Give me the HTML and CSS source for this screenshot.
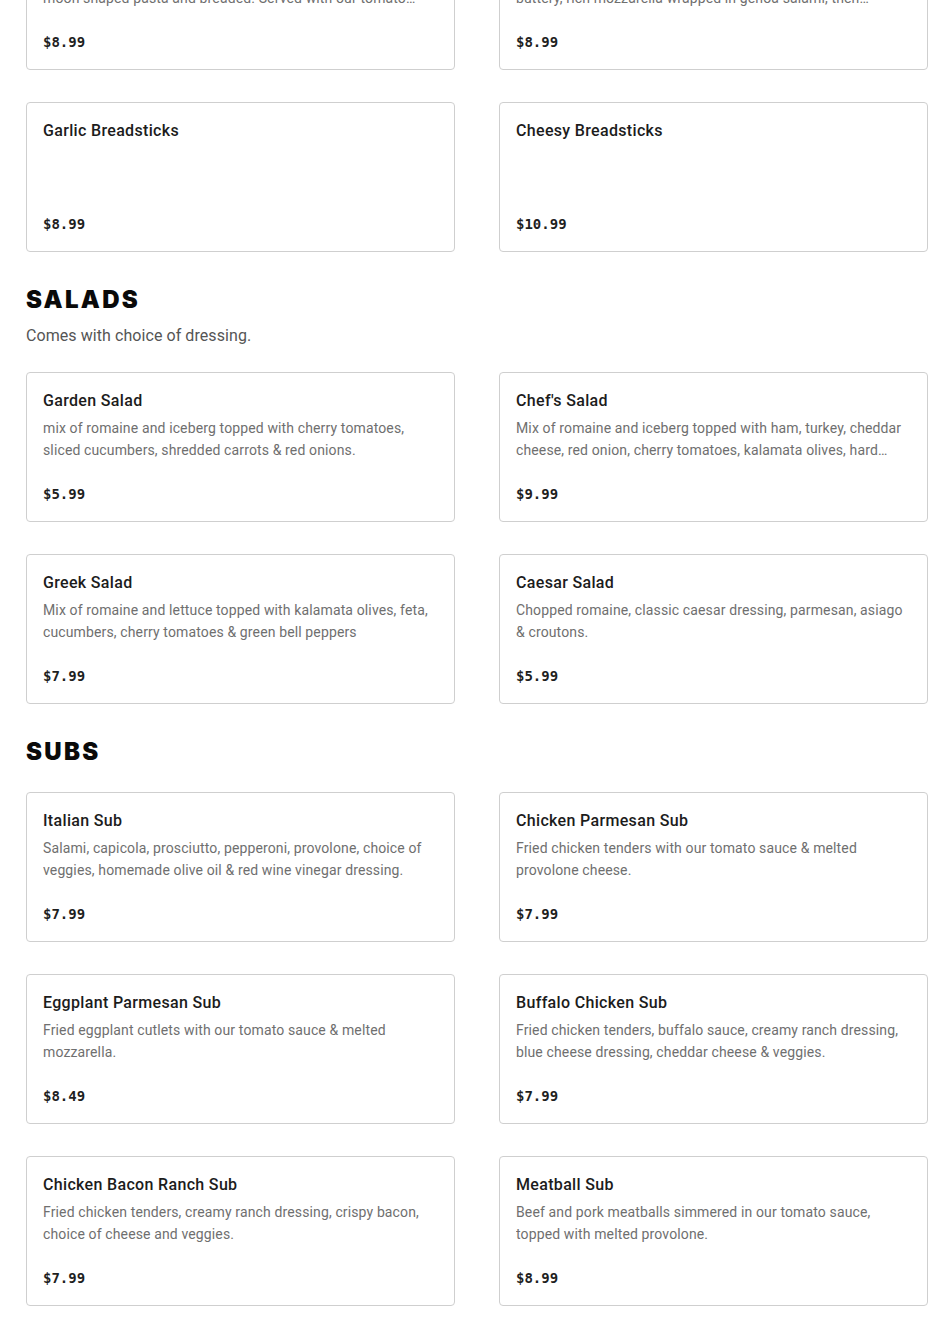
FILE: index.html
```html
<!DOCTYPE html>
<html lang="en">
<head>
<meta charset="utf-8">
<title>Menu</title>
<link rel="stylesheet" href="styles.css">
</head>
<body>
<main class="menu">
  <section class="section section-first">
    <div class="grid">
      <article class="card">
        <h3 class="item-name">Fried Ravioli</h3>
        <p class="item-desc">Cheese filled ravioli pasta, fried until golden brown, in a half moon shaped pasta and breaded. Served with our tomato sauce.</p>
        <div class="item-price">$8.99</div>
      </article>
      <article class="card">
        <h3 class="item-name">Mozzarella Rolls</h3>
        <p class="item-desc">Our mozzarella rolls are made with fresh, melty, soft and buttery, rich mozzarella wrapped in genoa salami, then smothered in our tomato sauce.</p>
        <div class="item-price">$8.99</div>
      </article>
      <article class="card">
        <h3 class="item-name">Garlic Breadsticks</h3>
        <p class="item-desc"></p>
        <div class="item-price">$8.99</div>
      </article>
      <article class="card">
        <h3 class="item-name">Cheesy Breadsticks</h3>
        <p class="item-desc"></p>
        <div class="item-price">$10.99</div>
      </article>
    </div>
  </section>

  <section class="section">
    <h2 class="section-title">SALADS</h2>
    <p class="section-note">Comes with choice of dressing.</p>
    <div class="grid">
      <article class="card">
        <h3 class="item-name">Garden Salad</h3>
        <p class="item-desc">mix of romaine and iceberg topped with cherry tomatoes, sliced cucumbers, shredded carrots &amp; red onions.</p>
        <div class="item-price">$5.99</div>
      </article>
      <article class="card">
        <h3 class="item-name">Chef's Salad</h3>
        <p class="item-desc">Mix of romaine and iceberg topped with ham, turkey, cheddar cheese, red onion, cherry tomatoes, kalamata olives, hard boiled egg &amp; croutons.</p>
        <div class="item-price">$9.99</div>
      </article>
      <article class="card">
        <h3 class="item-name">Greek Salad</h3>
        <p class="item-desc">Mix of romaine and lettuce topped with kalamata olives, feta, cucumbers, cherry tomatoes &amp; green bell peppers</p>
        <div class="item-price">$7.99</div>
      </article>
      <article class="card">
        <h3 class="item-name">Caesar Salad</h3>
        <p class="item-desc">Chopped romaine, classic caesar dressing, parmesan, asiago &amp; croutons.</p>
        <div class="item-price">$5.99</div>
      </article>
    </div>
  </section>

  <section class="section">
    <h2 class="section-title">SUBS</h2>
    <div class="grid">
      <article class="card">
        <h3 class="item-name">Italian Sub</h3>
        <p class="item-desc">Salami, capicola, prosciutto, pepperoni, provolone, choice of veggies, homemade olive oil &amp; red wine vinegar dressing.</p>
        <div class="item-price">$7.99</div>
      </article>
      <article class="card">
        <h3 class="item-name">Chicken Parmesan Sub</h3>
        <p class="item-desc">Fried chicken tenders with our tomato sauce &amp; melted provolone cheese.</p>
        <div class="item-price">$7.99</div>
      </article>
      <article class="card">
        <h3 class="item-name">Eggplant Parmesan Sub</h3>
        <p class="item-desc">Fried eggplant cutlets with our tomato sauce &amp; melted mozzarella.</p>
        <div class="item-price">$8.49</div>
      </article>
      <article class="card">
        <h3 class="item-name">Buffalo Chicken Sub</h3>
        <p class="item-desc">Fried chicken tenders, buffalo sauce, creamy ranch dressing, blue cheese dressing, cheddar cheese &amp; veggies.</p>
        <div class="item-price">$7.99</div>
      </article>
      <article class="card">
        <h3 class="item-name">Chicken Bacon Ranch Sub</h3>
        <p class="item-desc">Fried chicken tenders, creamy ranch dressing, crispy bacon, choice of cheese and veggies.</p>
        <div class="item-price">$7.99</div>
      </article>
      <article class="card">
        <h3 class="item-name">Meatball Sub</h3>
        <p class="item-desc">Beef and pork meatballs simmered in our tomato sauce, topped with melted provolone.</p>
        <div class="item-price">$8.99</div>
      </article>
    </div>
  </section>
</main>
</body>
</html>
```

FILE: styles.css
```css
* {
  box-sizing: border-box;
}

html, body {
  margin: 0;
  padding: 0;
  background: #ffffff;
}

body {
  font-family: Roboto, "Liberation Sans", Arial, sans-serif;
  color: #1f1f1f;
}

.menu {
  padding: 0 22px 40px 26px;
  margin-top: -80px;
}

.section {
  margin-top: 32px;
}

.section-first {
  margin-top: 0;
}

.section-title {
  margin: 0;
  font-family: Inter, "Liberation Sans", Arial, sans-serif;
  font-weight: 900;
  font-size: 24px;
  line-height: 32px;
  letter-spacing: 2.3px;
  color: #0a0a0a;
}

.section-note {
  margin: 8px 0 0;
  font-size: 16px;
  line-height: 24px;
  letter-spacing: 0.07px;
  color: #555555;
}

.grid {
  display: grid;
  grid-template-columns: 1fr 1fr;
  column-gap: 44px;
  row-gap: 32px;
  margin-top: 24px;
}

.section-first .grid {
  margin-top: 0;
}

.card {
  border: 1px solid #cfcfcf;
  border-radius: 4px;
  padding: 16px;
  height: 150px;
  display: flex;
  flex-direction: column;
}

.item-name {
  margin: 0;
  font-size: 16px;
  line-height: 24px;
  font-weight: 500;
  letter-spacing: 0.33px;
  color: #1c1c1c;
}

.item-desc {
  margin: 4px 0 0;
  font-size: 14px;
  line-height: 22px;
  height: 44px;
  letter-spacing: 0.13px;
  color: #6f6f6f;
  display: -webkit-box;
  -webkit-line-clamp: 2;
  -webkit-box-orient: vertical;
  overflow: hidden;
}

.item-price {
  margin-top: 23px;
  font-family: "DejaVu Sans Mono", "Liberation Mono", monospace;
  font-weight: bold;
  font-size: 14px;
  line-height: 20px;
  color: #1f1f1f;
}
```
